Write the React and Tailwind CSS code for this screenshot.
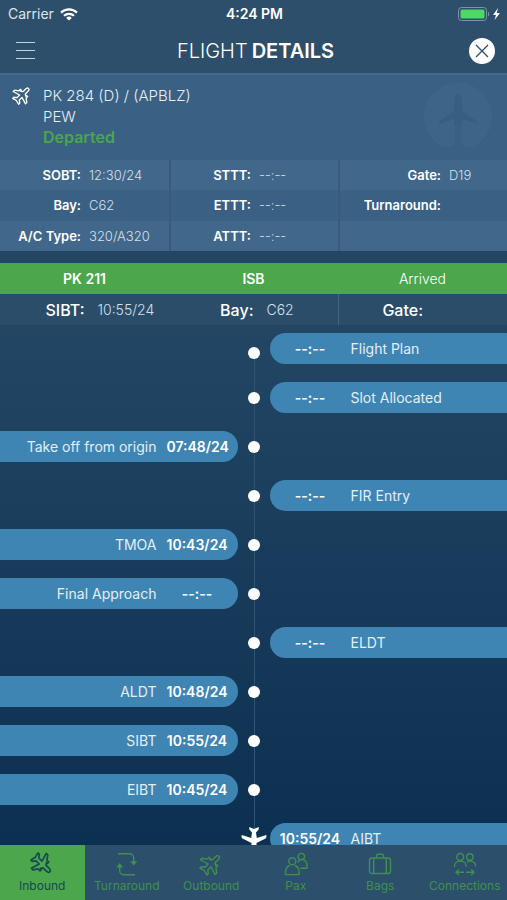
const infoColumns = [
  {
    labelWidth: "w-[81px]",
    items: [
      ["SOBT:", "12:30/24"],
      ["Bay:", "C62"],
      ["A/C Type:", "320/A320"],
    ],
  },
  {
    labelWidth: "w-[80px]",
    items: [
      ["STTT:", "--:--"],
      ["ETTT:", "--:--"],
      ["ATTT:", "--:--"],
    ],
  },
  {
    labelWidth: "w-[101px]",
    items: [
      ["Gate:", "D19"],
      ["Turnaround:", ""],
      ["", ""],
    ],
  },
];

const events = [
  { side: "right", time: "--:--", label: "Flight Plan", first: true },
  { side: "right", time: "--:--", label: "Slot Allocated" },
  { side: "left", time: "07:48/24", label: "Take off from origin" },
  { side: "right", time: "--:--", label: "FIR Entry" },
  { side: "left", time: "10:43/24", label: "TMOA" },
  { side: "left", time: "--:--", label: "Final Approach" },
  { side: "right", time: "--:--", label: "ELDT" },
  { side: "left", time: "10:48/24", label: "ALDT" },
  { side: "left", time: "10:55/24", label: "SIBT" },
  { side: "left", time: "10:45/24", label: "EIBT" },
  { side: "right", time: "10:55/24", label: "AIBT", plane: true },
];

function WifiIcon() {
  return (
    <svg className="h-[13px] w-[18px]" viewBox="0 0 18 13" fill="none" stroke="#fff" strokeWidth="2.2" aria-hidden="true">
      <path d="M1 4.6a11.6 11.6 0 0 1 16 0" />
      <path d="M4 7.8a7.2 7.2 0 0 1 10 0" />
      <path d="M9 12.6 6.2 9.9a4 4 0 0 1 5.6 0z" fill="#fff" stroke="none" />
    </svg>
  );
}

function BatteryIcon() {
  return (
    <svg className="h-[14px] w-[43px]" viewBox="0 0 43 14" aria-hidden="true">
      <rect x="0.5" y="0.5" width="28" height="13" rx="3" fill="none" stroke="#7f95a6" />
      <rect x="2.5" y="2.5" width="24" height="9" rx="1.5" fill="#4cd964" />
      <path d="M30 4.8c1.6.5 1.6 4 0 4.5z" fill="#7f95a6" />
      <path d="M40 1l-5 7h3l-1.5 5 5.5-7h-3.200z" fill="#fff" />
    </svg>
  );
}

function PlaneIcon({ className, strokeWidth }) {
  return (
    <svg className={className} viewBox="0 0 24 24" fill="none" stroke="currentColor" strokeWidth={strokeWidth} strokeLinejoin="round" aria-hidden="true">
      <path d="M12 .8c1.300 0 2 1.600 2 3.400v4.200l2.200 1.500V8.600h2v2.700l4.300 3v2.200L14 14v4.500l3 2.300v1.900l-5-1.300-5 1.300v-1.900l3-2.300V14l-8.500 2.500v-2.200l4.300-3V8.600h2v1.300L10 8.400V4.200C10 2.400 10.700.8 12 .8z" />
    </svg>
  );
}

function TurnaroundIcon() {
  return (
    <svg className="size-6" viewBox="0 0 24 24" fill="none" stroke="currentColor" strokeWidth="1.4" aria-hidden="true">
      <path d="M3 1.7h11.700a4 4 0 0 1 4 4V10" />
      <path d="M15.200 9.200h7l-3.500 4.300z" fill="currentColor" stroke="none" />
      <path d="M4.700 14v4.800a4 4 0 0 0 4 4H20" />
      <path d="M1.200 15.400h7l-3.500-4.300z" fill="currentColor" stroke="none" />
    </svg>
  );
}

function PaxIcon() {
  return (
    <svg className="size-6" viewBox="0 0 24 24" fill="none" stroke="currentColor" strokeWidth="1.4" strokeLinejoin="round" aria-hidden="true">
      <circle cx="8.300" cy="9.200" r="3.500" />
      <path d="M5.700 13.500C3 14.500 1.500 17 1.500 20v2.600h13.600V20c0-3-1.500-5.500-4.200-6.500" />
      <circle cx="17.300" cy="4.600" r="3.200" />
      <path d="M13.800 10.500c.4-1 1-1.700 1.800-2.200M19.500 7.900c2.200 1 3.500 3 3.500 5.600v2.700h-6.500" />
    </svg>
  );
}

function BagIcon() {
  return (
    <svg className="size-6" viewBox="0 0 24 24" fill="none" stroke="currentColor" strokeWidth="1.4" aria-hidden="true">
      <rect x="1.500" y="6" width="21" height="15.500" rx="2.500" />
      <path d="M5.700 6v15.500M18.300 6v15.500" />
      <path d="M8.500 6V3.800c0-1 .6-1.600 1.600-1.600h3.800c1 0 1.600.6 1.600 1.600V6" />
    </svg>
  );
}

function ConnectionsIcon() {
  return (
    <svg className="size-6" viewBox="0 0 24 24" fill="none" stroke="currentColor" strokeWidth="1.4" aria-hidden="true">
      <circle cx="7.200" cy="5" r="3.500" />
      <circle cx="16.800" cy="5" r="3.200" />
      <path d="M1.300 15c0-3.500 2.500-6 6-6s6 2.500 6 6" />
      <path d="M14 10.500c.8-1 1.700-1.500 3-1.500 3.200 0 5.700 2.300 5.700 5.500" />
      <path d="M3 20.300h8M5.800 17.500 3 20.300l2.800 2.800M13 20.300h8M18.200 17.500l2.800 2.800-2.800 2.800" />
    </svg>
  );
}

const tabs = [
  { label: "Inbound", active: true, icon: <PlaneIcon className="size-6 rotate-135" strokeWidth={1.7} /> },
  { label: "Turnaround", icon: <TurnaroundIcon /> },
  { label: "Outbound", icon: <PlaneIcon className="size-6 rotate-45" strokeWidth={1.4} /> },
  { label: "Pax", icon: <PaxIcon /> },
  { label: "Bags", icon: <BagIcon /> },
  { label: "Connections", icon: <ConnectionsIcon /> },
];

function Event({ event }) {
  const left = event.side === "left";
  return (
    <li className="grid h-[31px] grid-cols-[1fr_32px_1fr]">
      <div
        className={
          left
            ? "col-start-1 row-start-1 flex items-center justify-end gap-[10px] rounded-r-full bg-[#3f85b3] pr-[10px]"
            : "col-start-3 row-start-1 flex flex-row-reverse items-center justify-end gap-[10px] rounded-l-full bg-[#3f85b3] pl-[10px]"
        }
      >
        <span className="text-[#e3eef6]">{event.label}</span>
        <time className="w-[61px] text-center font-semibold text-white">{event.time}</time>
      </div>
      <div className="col-start-2 row-start-1 flex items-center justify-center">
        {event.plane ? (
          <svg className="h-[26px] w-[26px]" viewBox="0 0 26 26" fill="#fff" aria-hidden="true">
            <path d="M13 26c-1.500 0-2.500-1.500-2.500-3.500V17L1.500 12.500C.6 12 .4 10.500.7 9l9.500 3L11 6.500 8.300 3.500V1L13 3l4.700-2v2.500L15 6.500l.8 5.500 9.500-3c.3 1.500.1 3-.8 3.500L15.500 17v5.500c0 2-1 3.500-2.500 3.500z" />
          </svg>
        ) : (
          <span className={event.first ? "mt-2 size-3 rounded-full bg-white" : "size-3 rounded-full bg-white"} />
        )}
      </div>
    </li>
  );
}

export default function App() {
  return (
    <div className="flex h-screen flex-col overflow-hidden bg-[#234664] font-['Inter','Liberation_Sans',sans-serif] text-sm text-white">
      <header className="shrink-0 border-b-2 border-[#456a8b] bg-[#2d4f6b]">
        <div className="grid h-7 grid-cols-3 items-center pr-[6px] pl-2">
          <div className="flex items-center gap-[6px] text-[#dbe5ed]">
            Carrier <WifiIcon />
          </div>
          <div className="text-center font-semibold">4:24 PM</div>
          <div className="flex justify-end">
            <BatteryIcon />
          </div>
        </div>
        <div className="flex h-[45px] items-center justify-between pr-3 pl-4">
          <button type="button" aria-label="Menu" className="flex w-[26px] flex-col gap-[7px]">
            <span className="h-px w-[19px] bg-[#c3d1dc]" />
            <span className="h-px w-[19px] bg-[#c3d1dc]" />
            <span className="h-px w-[19px] bg-[#c3d1dc]" />
          </button>
          <h1 className="flex gap-1 text-xl font-light">
            FLIGHT <strong className="font-semibold">DETAILS</strong>
          </h1>
          <button type="button" aria-label="Close" className="flex size-[26px] items-center justify-center rounded-full bg-white">
            <svg className="size-[14px]" viewBox="0 0 14 14" stroke="#2d4f6b" strokeWidth="1.3" aria-hidden="true">
              <path d="M1 1l12 12M13 1 1 13" />
            </svg>
          </button>
        </div>
      </header>

      <section className="flex h-[85px] shrink-0 items-start bg-[#3a6084] pr-[14px] pl-3">
        <PlaneIcon className="mt-[10px] size-5 rotate-45 text-white" strokeWidth={1.6} />
        <div className="mt-[10px] ml-[11px] flex-1 text-[15px] leading-[21px] font-light text-[#e6eef5]">
          <p>PK 284 (D) / (APBLZ)</p>
          <p>PEW</p>
          <p className="text-base leading-[21px] font-semibold text-[#4aa64c]">Departed</p>
        </div>
        <svg className="mt-[6px] size-[70px]" viewBox="0 0 70 70" aria-hidden="true">
          <path d="M30 64a9 9 0 0 1-12 1A34 34 0 1 1 52 65a9 9 0 0 1-12-1c-1-1-2-3-2-5V43h-6v16c0 2-1 4-2 5z" fill="#3e6588" />
          <path d="M35 13c2.500 0 4 3 4 7v10l15 10v3l-15-5v6h-8v-6l-15 5v-3l15-10V20c0-4 1.500-7 4-7z" fill="#385e81" />
        </svg>
      </section>

      <section className="grid shrink-0 grid-cols-3 bg-[#3a6084]">
        {infoColumns.map((column, index) => (
          <dl key={index} className="border-[#375b7e] not-first:border-l-2">
            {column.items.map(([label, value], row) => (
              <div key={row} className="flex h-[30px] items-center gap-2 text-[13px] odd:bg-[#41678a] even:h-[31px]">
                <dt className={`${column.labelWidth} text-right font-semibold`}>{label}</dt>
                <dd className="font-light text-[#d3e0eb]">{value}</dd>
              </div>
            ))}
          </dl>
        ))}
      </section>

      <section className="mt-3 shrink-0">
        <div className="grid h-[31px] grid-cols-3 items-center bg-[#4ca64c] text-center">
          <strong className="font-semibold">PK 211</strong>
          <strong className="font-semibold">ISB</strong>
          <span className="font-light">Arrived</span>
        </div>
        <dl className="grid h-[31px] grid-cols-3 items-stretch bg-[#2b4d6a]">
          <div className="flex items-center gap-[13px]">
            <dt className="w-1/2 text-right text-base font-medium">SIBT:</dt>
            <dd className="font-light text-[#d3e0eb]">10:55/24</dd>
          </div>
          <div className="flex items-center gap-[13px]">
            <dt className="w-1/2 text-right text-base font-medium">Bay:</dt>
            <dd className="font-light text-[#d3e0eb]">C62</dd>
          </div>
          <div className="flex items-center border-l border-[#416483]">
            <dt className="w-1/2 text-right text-base font-medium">Gate:</dt>
          </div>
        </dl>
      </section>

      <main className="min-h-0 flex-1 overflow-hidden bg-linear-to-b from-[#234664] to-[#0c3052] pt-2">
        <div className="relative">
          <span className="absolute top-5 bottom-5 left-1/2 w-px bg-[#31536f]" />
          <ol className="relative flex flex-col gap-[18px]">
            {events.map((event) => (
              <Event key={event.label} event={event} />
            ))}
          </ol>
        </div>
      </main>

      <nav className="grid h-[55px] shrink-0 grid-cols-6 bg-[#2c4f6c]">
        {tabs.map((tab) => (
          <button
            key={tab.label}
            type="button"
            className={
              tab.active
                ? "flex flex-col items-center gap-[2px] bg-[#4ca64c] pt-[7px] text-xs text-[#154a50]"
                : "flex flex-col items-center gap-[2px] pt-[7px] text-xs text-[#3f8f50]"
            }
          >
            {tab.icon}
            <span>{tab.label}</span>
          </button>
        ))}
      </nav>
    </div>
  );
}
